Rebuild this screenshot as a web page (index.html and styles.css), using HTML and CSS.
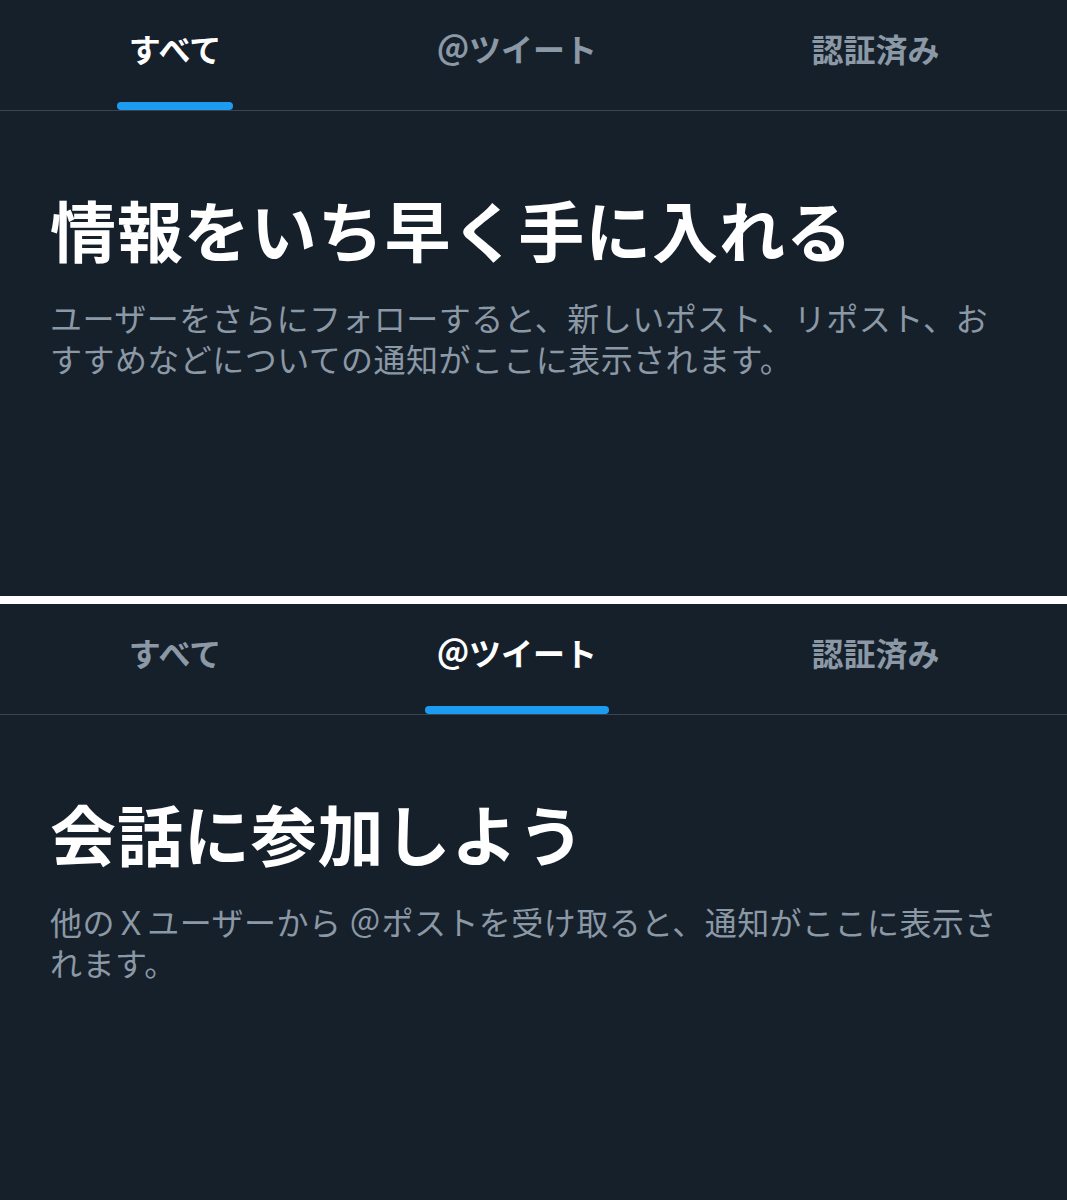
FILE: index.html
```html
<!DOCTYPE html>
<html lang="ja">
<head>
<meta charset="utf-8">
<title>通知</title>
<link rel="stylesheet" href="styles.css">
</head>
<body>
<div class="page">
  <section class="panel">
    <nav class="tabs">
      <div class="tab tab--active"><span class="tab-inner"><span class="tab-label">すべて</span><span class="tab-indicator"></span></span></div>
      <div class="tab"><span class="tab-inner"><span class="tab-label">＠ツイート</span><span class="tab-indicator"></span></span></div>
      <div class="tab"><span class="tab-inner"><span class="tab-label">認証済み</span><span class="tab-indicator"></span></span></div>
    </nav>
    <div class="content">
      <h1 class="title">情報をいち早く手に入れる</h1>
      <p class="desc">ユーザーをさらにフォローすると、新しいポスト、リポスト、おすすめなどについての通知がここに表示されます。</p>
    </div>
  </section>
  <section class="panel">
    <nav class="tabs">
      <div class="tab"><span class="tab-inner"><span class="tab-label">すべて</span><span class="tab-indicator"></span></span></div>
      <div class="tab tab--active"><span class="tab-inner"><span class="tab-label">＠ツイート</span><span class="tab-indicator"></span></span></div>
      <div class="tab"><span class="tab-inner"><span class="tab-label">認証済み</span><span class="tab-indicator"></span></span></div>
    </nav>
    <div class="content">
      <h1 class="title">会話に参加しよう</h1>
      <p class="desc">他のＸユーザーから ＠ポストを受け取ると、通知がここに表示されます。</p>
    </div>
  </section>
</div>
</body>
</html>
```
FILE: styles.css
```css
html, body {
  margin: 0;
  padding: 0;
  background: #ffffff;
}
body {
  font-family: "Noto Sans CJK JP", "Noto Sans", sans-serif;
}
.page {
  display: flex;
  flex-direction: column;
  gap: 8px;
  width: 1067px;
}
.panel {
  height: 596px;
  background: #16202b;
  display: flex;
  flex-direction: column;
  overflow: hidden;
}
.tabs {
  display: grid;
  grid-template-columns: 350px 334px 1fr;
  height: 110px;
  border-bottom: 1px solid #3a4550;
}
.tab {
  display: flex;
  justify-content: center;
  padding-top: 28px;
  box-sizing: border-box;
}
.tab-inner {
  display: flex;
  flex-direction: column;
  align-items: stretch;
}
.tab-label {
  font-size: 32px;
  line-height: 40px;
  font-weight: 700;
  color: #8b98a5;
  text-align: center;
  white-space: nowrap;
}
.tab-indicator {
  height: 8px;
  margin: 34px -12px 0;
  border-radius: 4px;
  background: transparent;
}
.tab--active .tab-label {
  color: #ffffff;
}
.tab--active .tab-indicator {
  background: #1d9bf0;
}
.content {
  padding: 77px 50px 0 50px;
}
.title {
  margin: 0;
  font-size: 66px;
  line-height: 80px;
  font-weight: 700;
  letter-spacing: 0.9px;
  color: #ffffff;
  white-space: nowrap;
}
.desc {
  margin: 29px 0 0 0;
  width: 955px;
  font-size: 32px;
  line-height: 41px;
  letter-spacing: 0.45px;
  color: #8b98a5;
}
```
